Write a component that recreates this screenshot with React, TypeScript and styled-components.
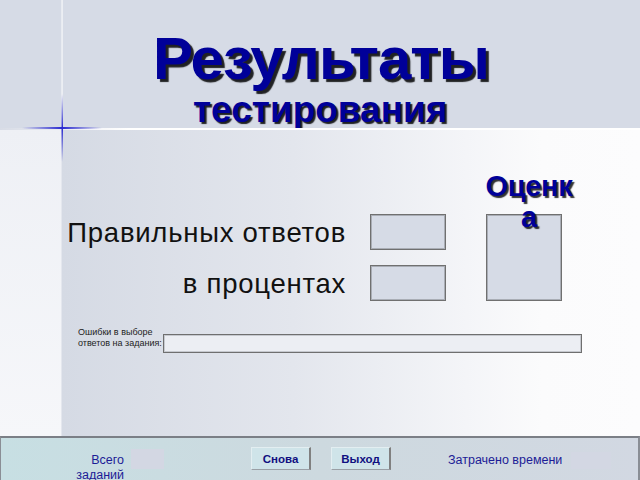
import React from "react";
import styled, { createGlobalStyle } from "styled-components";

const Global = createGlobalStyle`
  html, body { margin: 0; padding: 0; }
  body { font-family: "Liberation Sans", Arial, sans-serif; background: #ffffff; }
`;

const Page = styled.div`
  position: relative;
  width: 640px;
  height: 480px;
  overflow: hidden;
  display: grid;
  grid-template-columns: 62px 1fr;
  grid-template-rows: 128px 2px 306px 44px;
  background: #d6dbe6;
`;

const HeaderLeft = styled.div`
  background: #d6dbe6;
  border-right: 1px solid #e8ebf1;
`;

const Header = styled.header`
  background: #d6dbe6;
  border-left: 1px solid #eceef3;
  display: flex;
  flex-direction: column;
  padding: 26px 0 0 90px;
`;

const Title = styled.h1`
  margin: 0;
  font-family: "Liberation Sans", Arial, sans-serif;
  font-weight: bold;
  font-size: 60px;
  line-height: 66px;
  letter-spacing: -1px;
  color: #000099;
  text-shadow: 3px 3px 1px rgba(0, 0, 0, 0.85);
`;

const Subtitle = styled.h2`
  margin: 1px 0 0 40px;
  font-family: "Liberation Sans", Arial, sans-serif;
  font-weight: bold;
  font-size: 37px;
  line-height: 34px;
  letter-spacing: 0;
  color: #000099;
  text-shadow: 2px 2px 1px rgba(0, 0, 0, 0.85);
`;

const Divider = styled.div`
  grid-column: 1 / 3;
  background: linear-gradient(90deg, #d8dce6 0%, #ffffff 20%, #ffffff 100%);
`;

const SideColumn = styled.div`
  background: linear-gradient(180deg, #eef0f5 0%, #f6f7fa 100%);
  border-right: 1px solid #e4e7ee;
`;

const Main = styled.main`
  background: linear-gradient(90deg, #d5dae4 0%, #e3e6ed 40%, #f4f5f8 70%, #fbfbfc 83%, #fcfcfd 100%);
  padding: 84px 0 0 0;
  display: flex;
  flex-direction: column;
`;

const ScoreGrid = styled.div`
  display: grid;
  grid-template-columns: 284px 100px 116px;
  grid-template-rows: 36px 36px;
  row-gap: 15px;
`;

const RowLabel = styled.div<{ $row: number }>`
  grid-column: 1;
  grid-row: ${(p) => p.$row};
  text-align: right;
  white-space: nowrap;
  font-family: "Liberation Sans", Arial, sans-serif;
  font-size: 27.5px;
  letter-spacing: 0.75px;
  line-height: 38px;
  color: #111111;
`;

const ValueBox = styled.div<{ $row: number }>`
  grid-column: 2;
  grid-row: ${(p) => p.$row};
  margin-left: 24px;
  width: 76px;
  box-sizing: border-box;
  background: #d6dbe6;
  border: 1px solid #707070;
  box-shadow: inset 0 0 0 1px #a9adb5;
`;

const GradeCell = styled.div`
  grid-column: 3;
  grid-row: 1 / 3;
  margin-left: 40px;
  width: 76px;
  position: relative;
  box-sizing: border-box;
  background: #d6dbe6;
  border: 1px solid #707070;
  box-shadow: inset 0 0 0 1px #a9adb5;
`;

const GradeTitle = styled.div`
  position: absolute;
  left: -6px;
  top: -44px;
  width: 96px;
  text-align: center;
  word-break: break-all;
  font-family: "Liberation Sans", Arial, sans-serif;
  font-weight: bold;
  font-size: 29px;
  line-height: 31px;
  letter-spacing: -0.3px;
  color: #000099;
  text-shadow: 2px 2px 1px rgba(0, 0, 0, 0.8);
`;

const ErrorsRow = styled.div`
  display: flex;
  align-items: flex-start;
  margin-top: 26px;
  padding-left: 16px;
`;

const ErrorsLabel = styled.div`
  font-family: "Liberation Sans", Arial, sans-serif;
  font-size: 9px;
  line-height: 11px;
  color: #222222;
  width: 85px;
`;

const ErrorsField = styled.div`
  margin-top: 7px;
  width: 419px;
  height: 19px;
  box-sizing: border-box;
  background: #eceef3;
  border: 1px solid #6f6f6f;
  box-shadow: inset 0 0 0 1px #c6c9cf;
`;

const Footer = styled.footer`
  grid-column: 1 / 3;
  box-sizing: border-box;
  height: 56px;
  background: linear-gradient(90deg, #c7dfe3 0%, #cdd9df 50%, #d2d8e2 100%);
  border-top: 2px solid #7b7f86;
  border-left: 1px solid #8a8e95;
  border-right: 2px solid #8a8e95;
  display: flex;
  align-items: flex-start;
  padding: 9px 0 0 72px;
`;

const FooterLabel = styled.div<{ $width: number }>`
  width: ${(p) => p.$width}px;
  font-family: "Liberation Sans", Arial, sans-serif;
  font-size: 12.5px;
  line-height: 15px;
  color: #1c1c96;
  text-align: right;
  margin-top: 6px;
`;

const FooterBox = styled.div<{ $w: number; $h: number; $top: number; $gap: number }>`
  width: ${(p) => p.$w}px;
  height: ${(p) => p.$h}px;
  margin-top: ${(p) => p.$top}px;
  margin-left: ${(p) => p.$gap}px;
  background: #d3d7e3;
`;

const Button = styled.button<{ $gap: number }>`
  margin-left: ${(p) => p.$gap}px;
  width: 60px;
  height: 23px;
  padding: 0;
  box-sizing: border-box;
  background: #cfe4e9;
  border: none;
  border-right: 2px solid #808080;
  border-bottom: 1px solid #9aa0a6;
  border-top: 1px solid #e3eef1;
  border-left: 1px solid #e3eef1;
  font-family: "Liberation Sans", Arial, sans-serif;
  font-weight: bold;
  font-size: 11.5px;
  color: #101080;
  cursor: pointer;
`;

const FooterText = styled.div<{ $gap: number }>`
  margin-left: ${(p) => p.$gap}px;
  margin-top: 6px;
  font-family: "Liberation Sans", Arial, sans-serif;
  font-size: 12.5px;
  line-height: 15px;
  color: #1c1c96;
  white-space: nowrap;
`;

const Star = styled.svg`
  position: absolute;
  left: 22px;
  top: 88px;
  pointer-events: none;
`;

export default function App() {
  return (
    <>
      <Global />
      <Page>
        <HeaderLeft />
        <Header>
          <Title>Результаты</Title>
          <Subtitle>тестирования</Subtitle>
        </Header>
        <Divider />
        <SideColumn />
        <Main>
          <ScoreGrid>
            <RowLabel $row={1}>Правильных ответов</RowLabel>
            <ValueBox $row={1} />
            <RowLabel $row={2}>в процентах</RowLabel>
            <ValueBox $row={2} />
            <GradeCell>
              <GradeTitle>Оценка</GradeTitle>
            </GradeCell>
          </ScoreGrid>
          <ErrorsRow>
            <ErrorsLabel>
              Ошибки в выборе
              <br />
              ответов на задания:
            </ErrorsLabel>
            <ErrorsField />
          </ErrorsRow>
        </Main>
        <Footer>
          <FooterLabel $width={51}>
            Всего
            <br />
            заданий
          </FooterLabel>
          <FooterBox $w={33} $h={20} $top={2} $gap={7} />
          <Button $gap={87}>Снова</Button>
          <Button $gap={20}>Выход</Button>
          <FooterText $gap={57}>Затрачено времени</FooterText>
          <FooterBox $w={40} $h={17} $top={5} $gap={9} />
        </Footer>
        <Star width="80" height="80" viewBox="0 0 80 80">
          <defs>
            <linearGradient id="sh" x1="0" x2="1" y1="0" y2="0">
              <stop offset="0" stopColor="#2a2ad0" stopOpacity="0" />
              <stop offset="0.5" stopColor="#2a2ad0" stopOpacity="1" />
              <stop offset="1" stopColor="#2a2ad0" stopOpacity="0" />
            </linearGradient>
            <linearGradient id="sv" x1="0" x2="0" y1="0" y2="1">
              <stop offset="0" stopColor="#2a2ad0" stopOpacity="0" />
              <stop offset="0.5" stopColor="#2a2ad0" stopOpacity="1" />
              <stop offset="1" stopColor="#2a2ad0" stopOpacity="0" />
            </linearGradient>
          </defs>
          <rect x="0" y="39" width="80" height="2" fill="url(#sh)" />
          <rect x="39.5" y="6" width="1.5" height="68" fill="url(#sv)" />
        </Star>
      </Page>
    </>
  );
}
